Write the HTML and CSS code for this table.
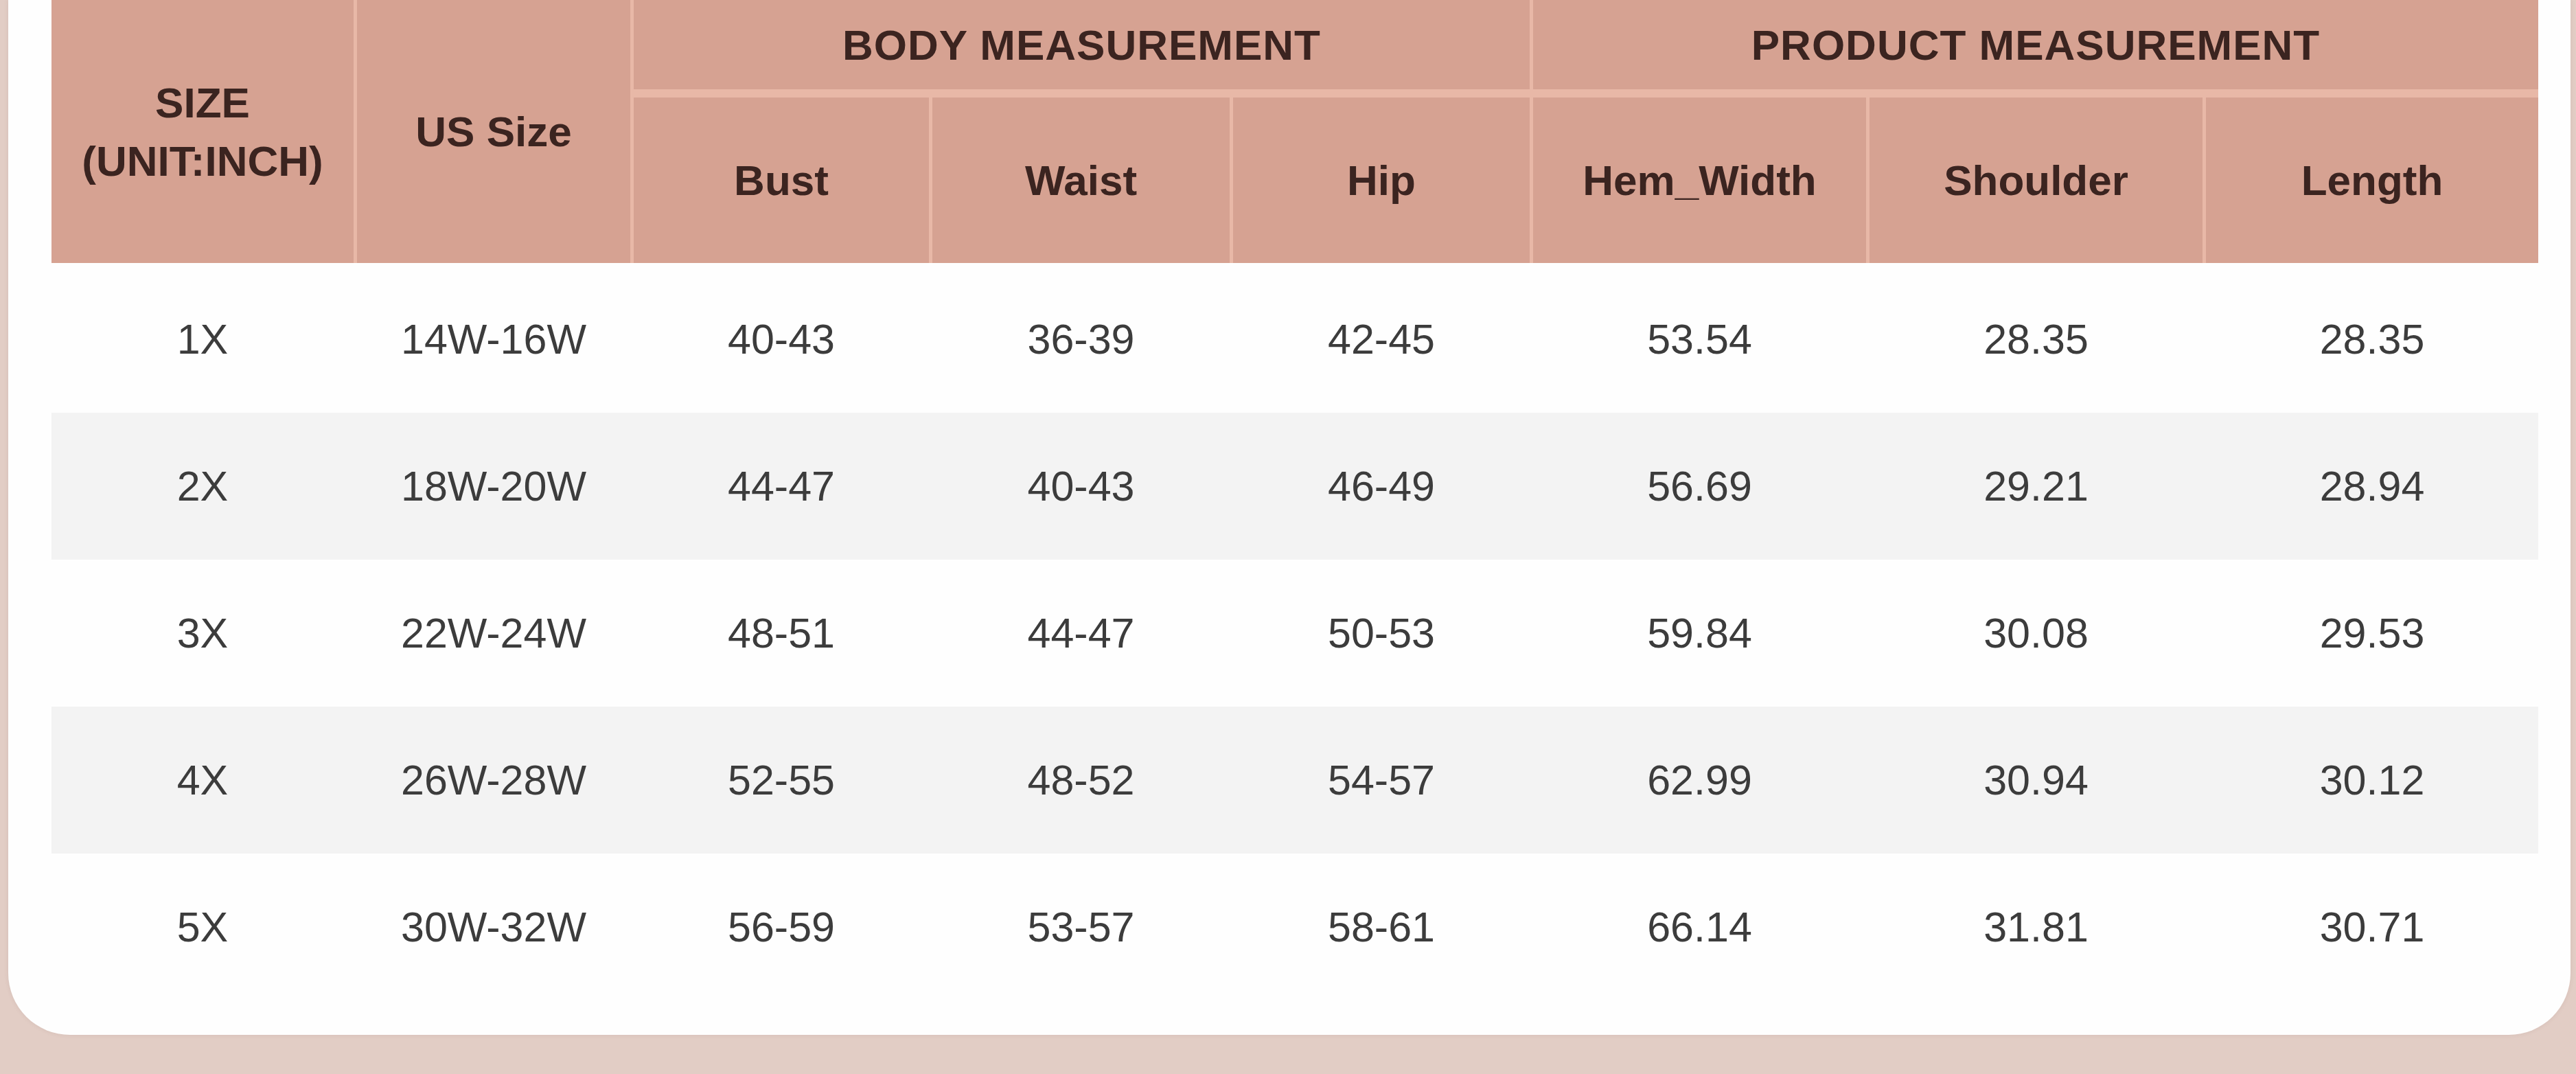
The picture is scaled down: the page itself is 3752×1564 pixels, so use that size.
FILE: index.html
```html
<!DOCTYPE html>
<html>
<head>
<meta charset="utf-8">
<link rel="stylesheet" href="styles.css">
</head>
<body>
<div class="card">
  <div class="head">
    <div class="h span2">SIZE<br>(UNIT:INCH)</div>
    <div class="h span2">US Size</div>
    <div class="h grp body-grp">BODY MEASUREMENT</div>
    <div class="h grp prod-grp">PRODUCT MEASUREMENT</div>
    <div class="h sub">Bust</div>
    <div class="h sub">Waist</div>
    <div class="h sub">Hip</div>
    <div class="h sub">Hem_Width</div>
    <div class="h sub">Shoulder</div>
    <div class="h sub">Length</div>
  </div>
  <div class="rows">
    <div class="row"><span>1X</span><span>14W-16W</span><span>40-43</span><span>36-39</span><span>42-45</span><span>53.54</span><span>28.35</span><span>28.35</span></div>
    <div class="row alt"><span>2X</span><span>18W-20W</span><span>44-47</span><span>40-43</span><span>46-49</span><span>56.69</span><span>29.21</span><span>28.94</span></div>
    <div class="row"><span>3X</span><span>22W-24W</span><span>48-51</span><span>44-47</span><span>50-53</span><span>59.84</span><span>30.08</span><span>29.53</span></div>
    <div class="row alt"><span>4X</span><span>26W-28W</span><span>52-55</span><span>48-52</span><span>54-57</span><span>62.99</span><span>30.94</span><span>30.12</span></div>
    <div class="row"><span>5X</span><span>30W-32W</span><span>56-59</span><span>53-57</span><span>58-61</span><span>66.14</span><span>31.81</span><span>30.71</span></div>
  </div>
</div>
</body>
</html>
```
FILE: styles.css
```css
html, body {
  margin: 0;
  padding: 0;
}
body {
  background: #e2cdc5;
  width: 3752px;
  height: 1564px;
  overflow: hidden;
  font-family: "Liberation Sans", Arial, sans-serif;
}
.card {
  margin: 0 8px 0 12px;
  padding: 0 47px 50px 63px;
  background: #fefefe;
  border-radius: 0 0 90px 90px;
  box-shadow: 0 0 6px rgba(120, 90, 80, 0.12);
}
.head {
  display: grid;
  grid-template-columns: 440px 398px 430px 433px 432px 485px 485px 484px;
  grid-template-rows: 130px 241px;
  column-gap: 5px;
  row-gap: 12px;
  background: #e8b8a7;
}
.h {
  background: #d6a292;
  color: #3b2420;
  font-weight: bold;
  font-size: 62px;
  display: flex;
  align-items: center;
  justify-content: center;
  text-align: center;
}
.span2 {
  grid-row: 1 / 3;
  line-height: 85px;
}
.body-grp {
  grid-column: 3 / 6;
  letter-spacing: 1px;
}
.prod-grp {
  grid-column: 6 / 9;
  letter-spacing: 1px;
}
.rows {
  margin-top: 4px;
}
.row {
  display: grid;
  grid-template-columns: 440px 398px 430px 433px 432px 485px 485px 484px;
  column-gap: 5px;
  height: 214px;
  align-items: center;
  color: #3c3c3c;
  font-size: 61px;
}
.row span {
  text-align: center;
}
.row.alt {
  background: #f3f3f3;
}
```
